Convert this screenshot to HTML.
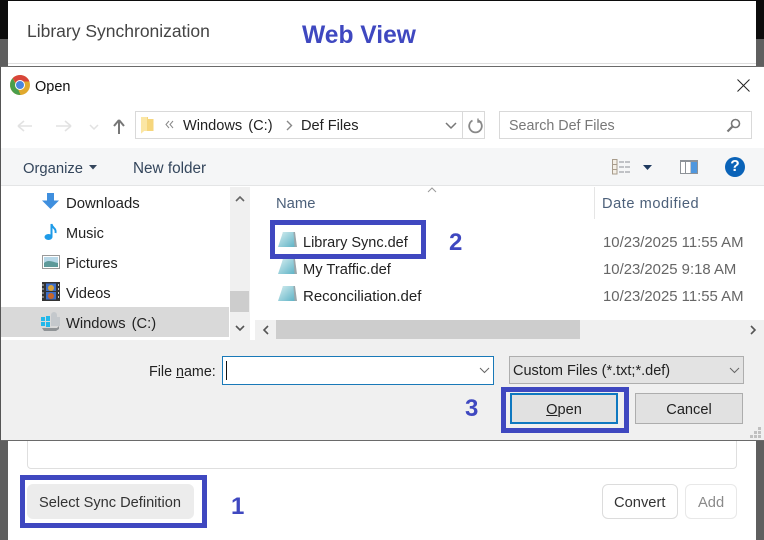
<!DOCTYPE html>
<html><head><meta charset="utf-8">
<style>
html,body{margin:0;padding:0;width:764px;height:540px;overflow:hidden;background:#5c5c5c}
body{position:relative;font-family:"Liberation Sans",sans-serif;color:#222}
.a{position:absolute;box-sizing:border-box}
.t{position:absolute;white-space:nowrap;line-height:18px;font-size:14.5px}
.b{position:absolute;box-sizing:border-box;border:5px solid #3f48c0}
.n{position:absolute;white-space:nowrap;color:#3f48c0;font-weight:bold;font-size:24px;line-height:28px}
svg{position:absolute;overflow:visible}
</style></head><body>
<div class="a" style="left:0;top:0;width:764px;height:39px;background:#0c0c0c"></div>
<div class="a" style="left:0;top:39px;width:8px;height:501px;background:#5f5f5f"></div>
<div class="a" style="left:756px;top:39px;width:8px;height:501px;background:#5f5f5f"></div>
<div class="a" style="left:8px;top:1px;width:748px;height:539px;background:#fff"></div>
<div class="a" style="left:8px;top:63px;width:748px;height:1px;background:#dedede"></div>
<div class="t" style="left:27px;top:21px;font-size:17.5px;line-height:20px;color:#444">Library Synchronization</div>
<div class="n" style="left:302px;top:22px;font-size:24.6px">Web View</div>

<!-- page below dialog -->
<div class="a" style="left:27px;top:430px;width:710px;height:39px;border:1px solid #dfdfdf;border-radius:0 0 4px 4px"></div>
<div class="a" style="left:27px;top:484px;width:167px;height:35px;background:#ececec;border-radius:6px"></div>
<div class="t" style="left:39px;top:494px;font-size:14.6px;color:#333">Select Sync Definition</div>
<div class="b" style="left:20px;top:475px;width:187px;height:53px"></div>
<div class="n" style="left:231px;top:493px">1</div>
<div class="a" style="left:602px;top:484px;width:76px;height:35px;border:1px solid #dcdcdc;border-radius:6px"></div>
<div class="t" style="left:614px;top:494px;font-size:14.7px;color:#333">Convert</div>
<div class="a" style="left:685px;top:484px;width:52px;height:35px;border:1px solid #e8e8e8;border-radius:6px"></div>
<div class="t" style="left:698px;top:494px;font-size:14.7px;color:#8a8a8a">Add</div>

<!-- dialog -->
<div class="a" style="left:0;top:66px;width:764px;height:375px;background:#fff;border-top:1px solid #6a6a6a;border-bottom:1px solid #6a6a6a;border-left:1px solid #555"></div>
<svg style="left:10px;top:75px" width="20" height="20" viewBox="0 0 20 20">
<circle cx="10" cy="10" r="10" fill="#e0a92e"/>
<path d="M10 0A10 10 0 0 1 19.4 6.5H10A3.6 3.6 0 0 0 6.6 9L2.6 3.3A10 10 0 0 1 10 0Z" fill="#d8453a"/>
<path d="M2.6 3.3L7 11.5L10.5 20A10 10 0 0 1 2.6 3.3Z" fill="#4a9e4c"/>
<circle cx="10" cy="10" r="5" fill="#fff"/><circle cx="10" cy="10" r="4" fill="#4a86e0"/></svg>
<div class="t" style="left:35px;top:78px;color:#111">Open</div>
<svg style="left:737px;top:79px" width="13" height="13" viewBox="0 0 13 13"><path d="M.5.5L12.5 12.5M12.5.5L.5 12.5" stroke="#222" stroke-width="1" fill="none"/></svg>

<!-- nav row -->
<svg style="left:17px;top:118px" width="120" height="16" viewBox="0 0 120 16" fill="none">
<path d="M1 8H15M1 8L7 3M1 8L7 13" stroke="#e2e2e2" stroke-width="1.6"/>
<path d="M39 8H54M54 8L48 3M54 8L48 13" stroke="#e2e2e2" stroke-width="1.6"/>
<path d="M73 7L77 11L81 7" stroke="#e2e2e2" stroke-width="1.5"/>
<path d="M102 16V2M102 2L97 8M102 2L107 8" stroke="#777" stroke-width="2"/></svg>
<div class="a" style="left:135px;top:111px;width:350px;height:28px;border:1px solid #d9d9d9"></div>
<div class="a" style="left:462px;top:111px;width:1px;height:28px;background:#d9d9d9"></div>
<svg style="left:141px;top:116px" width="13" height="18" viewBox="0 0 13 18"><path d="M0 1H7V3H12.5V15H3L0 17.5Z" fill="#f6d67c"/><path d="M0 1H6V15H3L0 17.5Z" fill="#fbe6a4"/></svg>
<svg style="left:165px;top:120px" width="9" height="9" viewBox="0 0 9 9" fill="none"><path d="M4 1L1 4.5L4 8M8 1L5 4.5L8 8" stroke="#888" stroke-width="1"/></svg>
<div class="t" style="left:183px;top:117px;font-size:14.6px;word-spacing:2px">Windows  (C:)</div>
<svg style="left:286px;top:120px" width="7" height="11" viewBox="0 0 7 11" fill="none"><path d="M1 1L5.5 5.5L1 10" stroke="#888" stroke-width="1.4"/></svg>
<div class="t" style="left:301px;top:117px;font-size:14.6px">Def Files</div>
<svg style="left:445px;top:122px" width="12" height="8" viewBox="0 0 12 8" fill="none"><path d="M1 1L6 6L11 1" stroke="#777" stroke-width="1.5"/></svg>
<svg style="left:468px;top:118px" width="15" height="16" viewBox="0 0 15 16" fill="none"><path d="M4.5 2.5A6.3 6.3 0 1 0 10.5 2.5" stroke="#888" stroke-width="1.8"/><path d="M10 .5V4H13.5" stroke="#888" stroke-width="1.4"/></svg>
<div class="a" style="left:499px;top:111px;width:253px;height:28px;border:1px solid #d9d9d9"></div>
<div class="t" style="left:509px;top:117px;font-size:14.3px;color:#777">Search Def Files</div>
<svg style="left:726px;top:118px" width="15" height="15" viewBox="0 0 15 15" fill="none"><circle cx="9.5" cy="5.5" r="4" stroke="#777" stroke-width="1.6"/><path d="M6.5 8.5L1.5 13.5" stroke="#777" stroke-width="2.2"/></svg>

<!-- toolbar -->
<div class="a" style="left:1px;top:148px;width:763px;height:38px;background:#f5f6f7;border-bottom:1px solid #e4e5e6"></div>
<div class="t" style="left:23px;top:160px;font-size:14.8px;color:#34465c">Organize</div>
<svg style="left:89px;top:165px" width="8" height="5" viewBox="0 0 8 5"><path d="M0 0H8L4 4.5Z" fill="#34465c"/></svg>
<div class="t" style="left:133px;top:160px;font-size:15.3px;color:#34465c">New folder</div>
<svg style="left:612px;top:159px" width="18" height="16" viewBox="0 0 18 16" fill="none">
<rect x=".5" y=".5" width="4.5" height="14.5" fill="#f4efe6" stroke="#a89c8c"/>
<path d="M.5 5.5H5M.5 10.5H5" stroke="#a89c8c"/>
<path d="M7 3H18M7 8H18M7 13H18" stroke="#8a8f96" stroke-width="1" stroke-dasharray="5 1"/></svg>
<svg style="left:643px;top:165px" width="9" height="5" viewBox="0 0 9 5"><path d="M0 0H9L4.5 5Z" fill="#1f3a5f"/></svg>
<svg style="left:680px;top:160px" width="18" height="14" viewBox="0 0 18 14">
<rect width="18" height="14" fill="#8d9298"/><rect x="1" y="2" width="4" height="11" fill="#fff"/><rect x="6" y="2" width="4.500" height="11" fill="#fff"/><rect x="11" y="2" width="6" height="11" fill="#4f97de"/></svg>
<svg style="left:725px;top:157px" width="20" height="20" viewBox="0 0 20 20"><circle cx="10" cy="10" r="10" fill="#0a63b8"/></svg>
<div class="t" style="left:725px;top:158px;width:20px;text-align:center;color:#fff;font-weight:bold;font-size:15.5px">?</div>

<!-- nav pane -->
<svg style="left:42px;top:193px" width="18" height="18" viewBox="0 0 18 18"><path d="M5 0H12V7.500H17L8.500 16L0 7.500H5Z" fill="#3f8fde"/></svg>
<div class="t" style="left:66px;top:195px;font-size:14.9px">Downloads</div>
<svg style="left:44px;top:223px" width="14" height="18" viewBox="0 0 14 18" fill="none"><ellipse cx="4.500" cy="14" rx="4" ry="3" fill="#1e9be8"/><path d="M7.500 14V1C8 5 12.500 5 11.500 10" stroke="#1e9be8" stroke-width="2"/></svg>
<div class="t" style="left:66px;top:225px">Music</div>
<svg style="left:42px;top:255px" width="18" height="15" viewBox="0 0 18 15"><rect x=".5" y=".5" width="17" height="13" fill="#fff" stroke="#9a9a9a"/><rect x="2" y="2" width="14" height="10" fill="#b8d8e8"/><path d="M2 8C6 4 11 7 16 8V12H2Z" fill="#5e9a9a"/></svg>
<div class="t" style="left:66px;top:255px;font-size:14.3px">Pictures</div>
<svg style="left:42px;top:282px" width="18" height="19" viewBox="0 0 18 19"><rect width="18" height="19" fill="#333"/><rect x="4" y="1.500" width="10" height="7.500" fill="#3d6fc8"/><rect x="4" y="10" width="10" height="7.500" fill="#3d6fc8"/><circle cx="9" cy="6" r="3" fill="#d8a33a"/><circle cx="9" cy="14" r="3" fill="#c8652a"/><path d="M1 2V17M16.500 2V17" stroke="#ccc" stroke-dasharray="2 2"/></svg>
<div class="t" style="left:66px;top:285px;font-size:14.7px">Videos</div>
<div class="a" style="left:1px;top:307px;width:228px;height:30px;background:#d9d9d9"></div>
<svg style="left:40px;top:312px" width="22" height="20" viewBox="0 0 22 20"><path d="M1 5H5V9H1ZM6 4H10V9H6ZM1 10H5V14H1ZM6 10H10V15H6Z" fill="#23b8ea"/><path d="M11 5V3A3 3 0 0 1 17 3V5H20V14H11Z" fill="#c4c8cc"/><path d="M2 16H17L19 14V17L16 19H4Z" fill="#8f9396"/></svg>
<div class="t" style="left:66px;top:315px;font-size:14.7px;word-spacing:2px">Windows  (C:)</div>
<div class="a" style="left:230px;top:187px;width:20px;height:153px;background:#f0f0f0"></div>
<div class="a" style="left:230px;top:291px;width:19px;height:21px;background:#cdcdcd"></div>
<svg style="left:235px;top:195px" width="10" height="7" viewBox="0 0 10 7" fill="none"><path d="M1 6L5 2L9 6" stroke="#666" stroke-width="1.600"/></svg>
<svg style="left:235px;top:325px" width="10" height="7" viewBox="0 0 10 7" fill="none"><path d="M1 1L5 5L9 1" stroke="#555" stroke-width="1.600"/></svg>

<!-- file list -->
<svg style="left:427px;top:187px" width="10" height="6" viewBox="0 0 10 6" fill="none"><path d="M1 5L5 1L9 5" stroke="#999"/></svg>
<div class="t" style="left:276px;top:195px;font-size:14.8px;color:#4c607a">Name</div>
<div class="a" style="left:594px;top:187px;width:1px;height:32px;background:#e5e5e5"></div>
<div class="t" style="left:602px;top:195px;font-size:14.6px;letter-spacing:.55px;color:#4c607a">Date modified</div>
<svg width="0" height="0" style="left:0;top:0"><defs><linearGradient id="g" x1="0" y1="0" x2="1" y2="1"><stop offset="0" stop-color="#d6eef0"/><stop offset="1" stop-color="#5fb3c6"/></linearGradient></defs></svg>
<svg style="left:278px;top:231px" width="20" height="18" viewBox="0 0 20 18"><path d="M5 1H17L19 16H1Z" fill="#9aa7ab"/><path d="M5 1H15.500L16.500 16H0Z" fill="url(#g)"/></svg>
<svg style="left:278px;top:258px" width="20" height="18" viewBox="0 0 20 18"><path d="M5 1H17L19 16H1Z" fill="#9aa7ab"/><path d="M5 1H15.500L16.500 16H0Z" fill="url(#g)"/></svg>
<svg style="left:278px;top:285px" width="20" height="18" viewBox="0 0 20 18"><path d="M5 1H17L19 16H1Z" fill="#9aa7ab"/><path d="M5 1H15.500L16.500 16H0Z" fill="url(#g)"/></svg>
<div class="t" style="left:303px;top:234px;font-size:14.5px">Library Sync.def</div>
<div class="t" style="left:303px;top:261px;font-size:14.7px">My Traffic.def</div>
<div class="t" style="left:303px;top:288px;font-size:15px">Reconciliation.def</div>
<div class="t" style="left:603px;top:234px;font-size:14.9px;color:#666">10/23/2025 11:55 AM</div>
<div class="t" style="left:603px;top:261px;font-size:14.9px;color:#666">10/23/2025 9:18 AM</div>
<div class="t" style="left:603px;top:288px;font-size:14.9px;color:#666">10/23/2025 11:55 AM</div>
<div class="b" style="left:270px;top:220px;width:156px;height:39px"></div>
<div class="n" style="left:449px;top:229px">2</div>
<div class="a" style="left:255px;top:320px;width:509px;height:20px;background:#f0f0f0"></div>
<div class="a" style="left:276px;top:320px;width:304px;height:19px;background:#cdcdcd"></div>
<svg style="left:262px;top:325px" width="7" height="10" viewBox="0 0 7 10" fill="none"><path d="M6 1L2 5L6 9" stroke="#555" stroke-width="1.600"/></svg>
<svg style="left:750px;top:325px" width="7" height="10" viewBox="0 0 7 10" fill="none"><path d="M1 1L5 5L1 9" stroke="#555" stroke-width="1.600"/></svg>

<!-- bottom -->
<div class="a" style="left:1px;top:340px;width:763px;height:100px;background:#f0f0f0"></div>
<div class="t" style="left:149px;top:363px;font-size:14.3px">File <u>n</u>ame:</div>
<div class="a" style="left:222px;top:356px;width:272px;height:29px;background:#fff;border:1px solid #1979b8"></div>
<div class="a" style="left:226px;top:361px;width:1px;height:19px;background:#111"></div>
<svg style="left:479px;top:367px" width="11" height="7" viewBox="0 0 11 7" fill="none"><path d="M1 1L5.500 5.500L10 1" stroke="#666"/></svg>
<div class="a" style="left:509px;top:356px;width:235px;height:28px;background:#e3e3e3;border:1px solid #aeaeae"></div>
<div class="t" style="left:513px;top:362px;font-size:14.5px">Custom Files (*.txt;*.def)</div>
<svg style="left:729px;top:367px" width="11" height="7" viewBox="0 0 11 7" fill="none"><path d="M1 1L5.500 5.500L10 1" stroke="#666"/></svg>
<div class="n" style="left:465px;top:395px">3</div>
<div class="a" style="left:510px;top:393px;width:108px;height:31px;background:#e1e1e1;border:2px solid #0f78c0"></div>
<div class="t" style="left:510px;top:401px;width:108px;text-align:center;font-size:14.6px"><u>O</u>pen</div>
<div class="b" style="left:501px;top:387px;width:128px;height:46px"></div>
<div class="a" style="left:635px;top:393px;width:108px;height:31px;background:#e1e1e1;border:1px solid #adadad"></div>
<div class="t" style="left:635px;top:401px;width:108px;text-align:center;font-size:14.6px">Cancel</div>
<svg style="left:750px;top:427px" width="12" height="12" viewBox="0 0 12 12" fill="#c0c0c0"><path d="M8 0h3v3H8zM4 4h3v3H4zM8 4h3v3H8zM0 8h3v3H0zM4 8h3v3H4zM8 8h3v3H8z"/></svg>
</body></html>
